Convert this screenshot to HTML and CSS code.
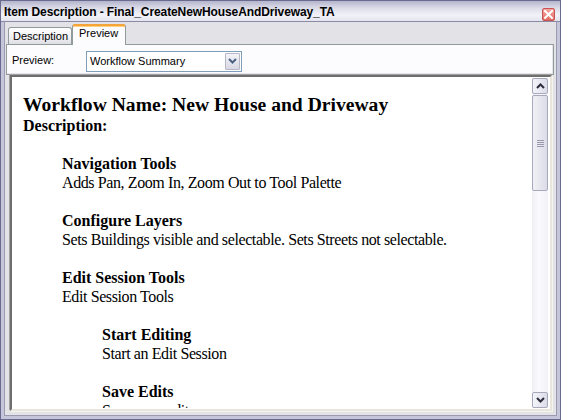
FILE: index.html
```html
<!DOCTYPE html>
<html>
<head>
<meta charset="utf-8">
<link rel="stylesheet" href="styles.css">
</head>
<body>
<div class="window">
  <div class="titlebar">
    <span class="title">Item Description - Final_CreateNewHouseAndDriveway_TA</span>
    <span class="close"><svg width="9" height="9" viewBox="0 0 9 9"><path d="M1 1 L8 8 M8 1 L1 8" stroke="#fff" stroke-width="2" stroke-linecap="square"/></svg></span>
  </div>
  <div class="client">
    <div class="tabs">
      <div class="tab">Description</div>
      <div class="tab active">Preview</div>
    </div>
    <div class="panel">
      <span class="label">Preview:</span>
      <div class="select">
        <span class="value">Workflow Summary</span>
        <span class="dropbtn"><svg width="9" height="6" viewBox="0 0 9 6"><path d="M1 1 L4.5 4.5 L8 1" fill="none" stroke="#4d6185" stroke-width="2"/></svg></span>
      </div>
    </div>
    <div class="viewer">
      <div class="doc">
        <div class="wf-name">Workflow Name: New House and Driveway</div>
        <div class="bold">Description:</div>
        <div class="lvl1">
          <div class="step">
            <div class="bold">Navigation Tools</div>
            <div class="txt">Adds Pan, Zoom In, Zoom Out to Tool Palette</div>
          </div>
          <div class="step">
            <div class="bold">Configure Layers</div>
            <div class="txt">Sets Buildings visible and selectable. Sets Streets not selectable.</div>
          </div>
          <div class="step">
            <div class="bold">Edit Session Tools</div>
            <div class="txt">Edit Session Tools</div>
            <div class="lvl2">
              <div class="step">
                <div class="bold">Start Editing</div>
                <div class="txt">Start an Edit Session</div>
              </div>
              <div class="step">
                <div class="bold">Save Edits</div>
                <div class="txt">Save your edits</div>
              </div>
            </div>
          </div>
        </div>
      </div>
      <div class="scrollbar">
        <div class="sbtn"><svg width="9" height="6" viewBox="0 0 9 6"><path d="M1 5 L4.5 1.5 L8 5" fill="none" stroke="#2b2b3b" stroke-width="2"/></svg></div>
        <div class="thumb"><span class="grip"></span></div>
        <div class="track"></div>
        <div class="sbtn"><svg width="9" height="6" viewBox="0 0 9 6"><path d="M1 1 L4.5 4.5 L8 1" fill="none" stroke="#2b2b3b" stroke-width="2"/></svg></div>
      </div>
    </div>
  </div>
</div>
</body>
</html>
```
FILE: styles.css
```css
html, body {
  margin: 0;
  padding: 0;
  background: #ffffff;
}
.window {
  width: 561px;
  height: 420px;
  box-sizing: border-box;
  border: 1px solid #6a6a8e;
  background: #c6c6da;
  padding: 0 3px 3px 3px;
  display: flex;
  flex-direction: column;
  font-family: "Liberation Sans", Arial, sans-serif;
  font-size: 11px;
  color: #000;
  overflow: hidden;
}
.titlebar {
  height: 20px;
  flex: none;
  margin: 0 -3px;
  padding: 0 5px 0 3px;
  display: flex;
  align-items: center;
  justify-content: space-between;
  background: linear-gradient(#b4b4cc 0%, #dcdce8 35%, #f2f2f8 70%, #e4e4ee 100%);
  border-bottom: 1px solid #8a8aa6;
}
.title {
  font-weight: bold;
  font-size: 12px;
  letter-spacing: -0.1px;
  color: #000;
  padding-top: 2px;
}
.close {
  width: 11px;
  height: 11px;
  border: 1px solid #c85454;
  border-radius: 2px;
  background: linear-gradient(#f6a7a0, #e26c62);
  display: flex;
  align-items: center;
  justify-content: center;
  margin-top: 6px;
}
.client {
  flex: 1;
  min-height: 0;
  overflow: hidden;
  background: #e3e2e7;
  display: flex;
  flex-direction: column;
  border-left: 1px solid #9a9ab0;
  border-right: 1px solid #9a9ab0;
  border-bottom: 1px solid #9a9ab0;
}
.tabs {
  height: 22px;
  flex: none;
  display: flex;
  align-items: flex-end;
  padding-left: 3px;
  position: relative;
  z-index: 1;
}
.tab {
  height: 16px;
  padding: 0 3px 0 4px;
  border: 1px solid #919b9c;
  border-bottom: none;
  border-radius: 3px 3px 0 0;
  background: linear-gradient(#ffffff, #ecebef 70%, #dedde4);
  line-height: 17px;
}
.tab.active {
  height: 19px;
  padding: 0 7px 0 6px;
  border-top: 2px solid #f5a43a;
  background: #fcfcfe;
  line-height: 14px;
  margin-bottom: -1px;
  box-shadow: inset 0 1px 0 #ffd281;
}
.panel {
  height: 29px;
  flex: none;
  margin: 0 2px 0 1px;
  border: 1px solid #919b9c;
  background: #fcfcfe;
  display: flex;
  align-items: center;
  padding-left: 5px;
  box-shadow: inset -1px -1px 0 #e6e6ea;
}
.label {
  width: 74px;
  margin-top: 0;
}
.select {
  width: 154px;
  height: 19px;
  border: 1px solid #7f9db9;
  background: #fff;
  display: flex;
  align-items: center;
  justify-content: space-between;
  margin-top: 3px;
}
.value {
  padding-left: 3px;
}
.dropbtn {
  width: 15px;
  height: 17px;
  margin-right: 1px;
  border: 1px solid #b7b7c8;
  border-radius: 1px;
  background: linear-gradient(#f4f4f8, #d8d8e4);
  display: flex;
  align-items: center;
  justify-content: center;
  box-sizing: border-box;
}
.viewer {
  flex: 1;
  min-height: 0;
  margin: 0 4px 4px 5px;
  border-top: 2px solid #6e6e6e;
  border-left: 2px solid #6e6e6e;
  border-right: 2px solid #e8e6dc;
  border-bottom: 2px solid #e8e6dc;
  box-shadow: -1px -1px 0 #a0a0a0, 1px 1px 0 #f4f3ec;
  background: #fff;
  display: flex;
  padding: 1px 2px 1px 0;
  overflow: hidden;
}
.doc {
  flex: 1;
  overflow: hidden;
  padding: 15px 0 0 11px;
  font-family: "Liberation Serif", "Times New Roman", serif;
  font-size: 16px;
  line-height: 19px;
  color: #000;
}
.wf-name {
  font-weight: bold;
  font-size: 19.6px;
  line-height: 23px;
}
.bold {
  font-weight: bold;
}
.txt {
  letter-spacing: -0.4px;
}
.lvl1 {
  padding-left: 39px;
}
.lvl2 {
  padding-left: 40px;
}
.step {
  margin-top: 19px;
}
.scrollbar {
  width: 16px;
  display: flex;
  flex-direction: column;
  background: linear-gradient(90deg, #eeeef4, #fafafd 40%, #f2f2f7);
}
.sbtn {
  height: 16px;
  flex: none;
  box-sizing: border-box;
  border: 1px solid #a8a8bc;
  border-radius: 2px;
  background: linear-gradient(90deg, #f4f4fa, #dcdce8);
  display: flex;
  align-items: center;
  justify-content: center;
}
.thumb {
  height: 96px;
  flex: none;
  margin-top: 1px;
  box-sizing: border-box;
  border: 1px solid #a8a8bc;
  border-radius: 2px;
  background: linear-gradient(90deg, #f0f0f6, #dcdce8);
  display: flex;
  align-items: center;
  justify-content: center;
}
.grip {
  width: 7px;
  height: 7px;
  background: repeating-linear-gradient(#9a9aae 0 1px, transparent 1px 2px);
}
.track {
  flex: 1;
}
```
